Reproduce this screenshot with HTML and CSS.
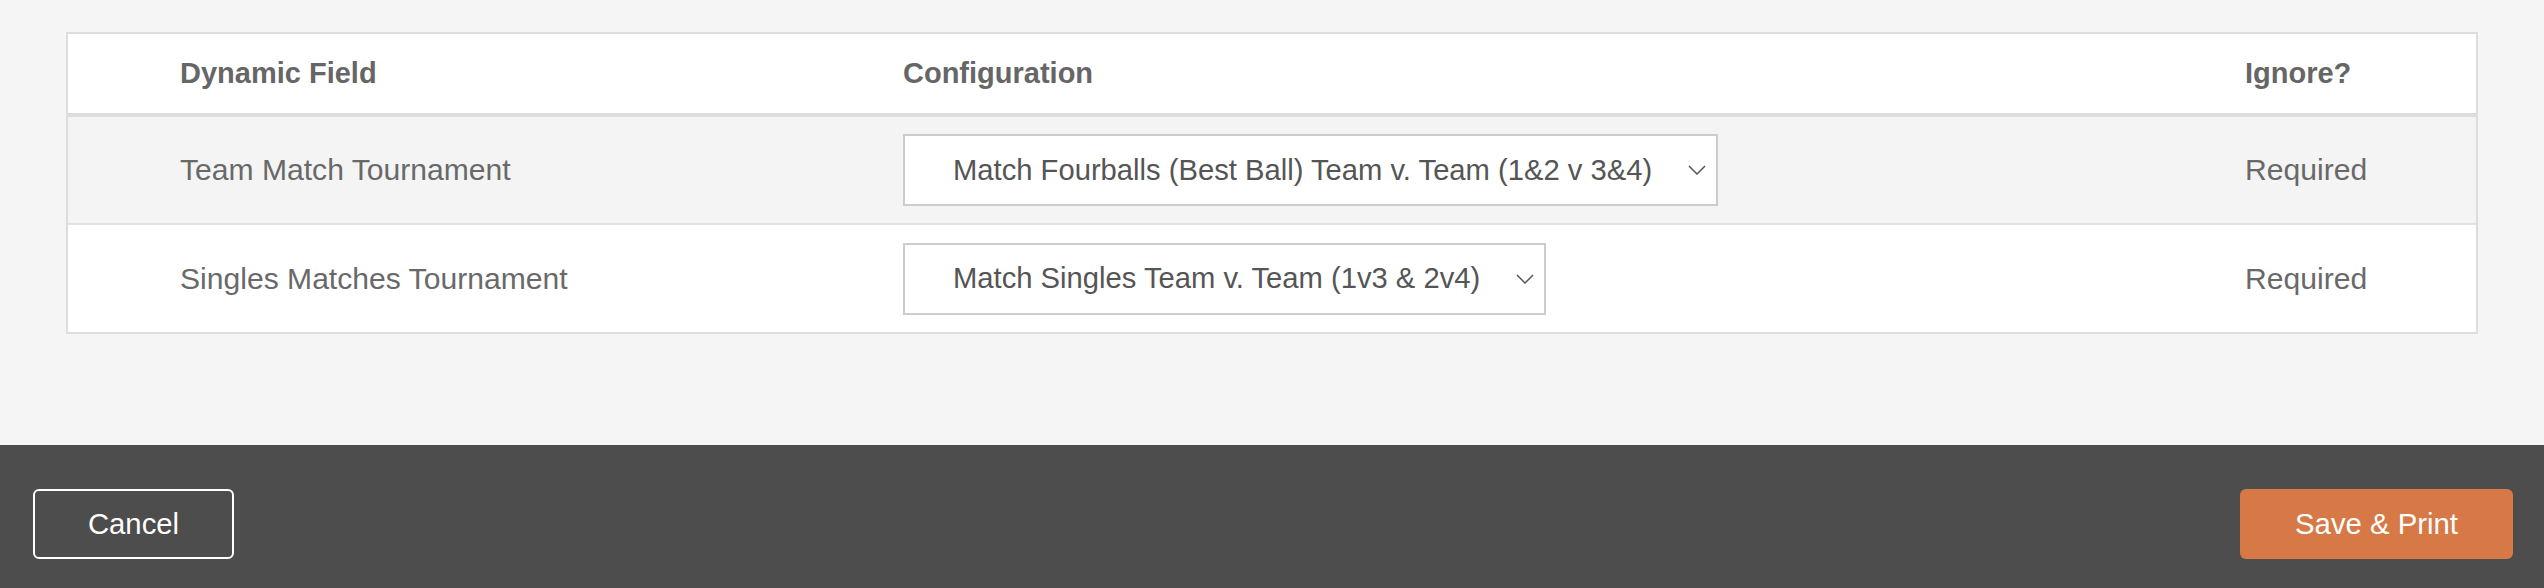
FILE: index.html
```html
<!DOCTYPE html>
<html lang="en">
<head>
<meta charset="utf-8">
<title>Dynamic Fields</title>
<link rel="stylesheet" href="styles.css">
</head>
<body>
<main class="content">
  <div class="table">
    <div class="row head">
      <div class="cell">Dynamic Field</div>
      <div class="cell">Configuration</div>
      <div class="cell">Ignore?</div>
    </div>
    <div class="row stripe">
      <div class="cell label">Team Match Tournament</div>
      <div class="cell">
        <div class="select">
          <span>Match Fourballs (Best Ball) Team v. Team (1&amp;2 v 3&amp;4)</span>
          <svg class="chev" width="18" height="10" viewBox="0 0 18 10"><polyline points="1,1 9,9 17,1" fill="none" stroke="#555" stroke-width="1.5"/></svg>
        </div>
      </div>
      <div class="cell label">Required</div>
    </div>
    <div class="row">
      <div class="cell label">Singles Matches Tournament</div>
      <div class="cell">
        <div class="select">
          <span>Match Singles Team v. Team (1v3 &amp; 2v4)</span>
          <svg class="chev" width="18" height="10" viewBox="0 0 18 10"><polyline points="1,1 9,9 17,1" fill="none" stroke="#555" stroke-width="1.5"/></svg>
        </div>
      </div>
      <div class="cell label">Required</div>
    </div>
  </div>
</main>
<footer class="footer">
  <button class="btn btn-cancel">Cancel</button>
  <button class="btn btn-save">Save &amp; Print</button>
</footer>
</body>
</html>
```

FILE: styles.css
```css
* { box-sizing: border-box; }
html, body { margin: 0; padding: 0; }
body {
  width: 2544px;
  height: 588px;
  overflow: hidden;
  background: #f5f5f5;
  font-family: "Liberation Sans", Arial, sans-serif;
  display: flex;
  flex-direction: column;
}
.content {
  height: 445px;
  flex: none;
  padding: 32px 66px 0 66px;
}
.table {
  background: #fff;
  border: 2px solid #dddddd;
}
.row {
  display: grid;
  grid-template-columns: 723px 1342px 1fr;
  padding-left: 112px;
  align-items: center;
  height: 108px;
  border-bottom: 2px solid #e2e2e2;
}
.row:last-child { border-bottom: none; height: 107px; }
.row.head {
  height: 83px;
  border-bottom: 4px solid #dddddd;
  font-weight: bold;
  font-size: 29px;
  color: #666666;
}
.row.stripe { background: #f4f4f4; }
.label {
  font-size: 30.1px;
  color: #696969;
}
.select {
  display: inline-flex;
  align-items: center;
  gap: 36px;
  height: 72px;
  padding: 0 10px 0 48px;
  background: #fff;
  border: 2px solid #cccccc;
  font-size: 29.2px;
  color: #555555;
}
.chev { display: block; flex: none; }
.footer {
  flex: 1;
  background: #4d4d4d;
  display: flex;
  justify-content: space-between;
  align-items: flex-start;
  padding: 44px 31px 0 33px;
}
.btn {
  font-family: "Liberation Sans", Arial, sans-serif;
  font-size: 29.3px;
  color: #fff;
  height: 70px;
  border-radius: 6px;
  cursor: pointer;
}
.btn-cancel {
  width: 201px;
  background: transparent;
  border: 2px solid #ffffff;
}
.btn-save {
  width: 273px;
  background: #d77946;
  border: none;
}
```
